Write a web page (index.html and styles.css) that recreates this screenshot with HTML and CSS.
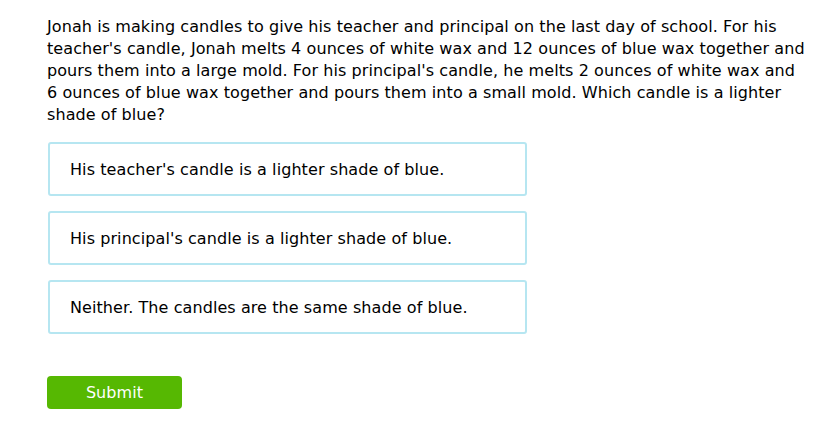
FILE: index.html
```html
<!DOCTYPE html>
<html>
<head>
<meta charset="utf-8">
<link rel="stylesheet" href="styles.css">
</head>
<body>
<div class="page">
  <p class="question">Jonah is making candles to give his teacher and principal on the last day of school. For his teacher's candle, Jonah melts 4 ounces of white wax and 12 ounces of blue wax together and pours them into a large mold. For his principal's candle, he melts 2 ounces of white wax and 6 ounces of blue wax together and pours them into a small mold. Which candle is a lighter shade of blue?</p>
  <div class="choices">
    <div class="choice">His teacher's candle is a lighter shade of blue.</div>
    <div class="choice">His principal's candle is a lighter shade of blue.</div>
    <div class="choice">Neither. The candles are the same shade of blue.</div>
  </div>
  <button class="submit">Submit</button>
</div>
</body>
</html>
```
FILE: styles.css
```css
html, body {
  margin: 0;
  padding: 0;
  background: #fff;
}
.page {
  padding: 16px 0 0 47px;
  width: 760px;
  font-family: "DejaVu Sans", Verdana, sans-serif;
  font-size: 16px;
  letter-spacing: 0.08px;
  color: #000;
}
.question {
  margin: 0;
  line-height: 22px;
}
.choices {
  margin-top: 16px;
  display: flex;
  flex-direction: column;
  gap: 15px;
  margin-left: 1px;
  width: 479px;
}
.choice {
  box-sizing: border-box;
  height: 54px;
  border: 2px solid #b6e6f1;
  border-radius: 3px;
  padding: 2px 0 0 20px;
  display: flex;
  align-items: center;
  line-height: 22px;
}
.submit {
  margin-top: 42px;
  display: block;
  width: 135px;
  height: 33px;
  border: none;
  border-radius: 4px;
  background: #56b802;
  color: #fff;
  font-family: "DejaVu Sans", Verdana, sans-serif;
  font-size: 16px;
  letter-spacing: 0.08px;
  padding: 0;
}
```
